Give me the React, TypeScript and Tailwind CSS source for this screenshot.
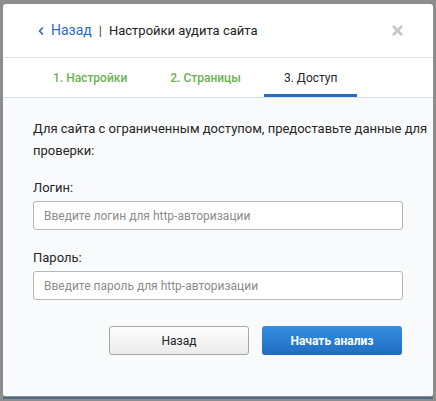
import { ChevronLeft, X } from "lucide-react";

const font = { fontFamily: "Roboto, 'Noto Sans', sans-serif" };

function Tab({ label, done, active }: { label: string; done?: boolean; active?: boolean }) {
  return (
    <div
      className={
        "flex h-full items-center px-5 pt-[4px] text-[12px] border-b-[3px] " +
        (active ? "border-[#2a6cc0] text-[#262626]" : "border-transparent") +
        (done ? " font-medium text-[#6cb153]" : "")
      }
    >
      {label}
    </div>
  );
}

function Field({ label, placeholder }: { label: string; placeholder: string }) {
  return (
    <div className="flex flex-col">
      <label className="text-[13px] text-[#262626] leading-[18px] mb-[4px]">{label}</label>
      <input
        placeholder={placeholder}
        className="h-[29px] w-full rounded-[3px] border border-[#b7b7b7] bg-white px-[10px] text-[12px] text-[#333] placeholder:text-[#8c8c8c] outline-none"
        style={font}
      />
    </div>
  );
}

export default function App() {
  return (
    <div className="h-[401px] w-[436px] overflow-hidden bg-[#8d8d8d] pt-[4px] px-[3px]" style={font}>
      <div className="flex h-[392px] flex-col overflow-hidden rounded-[3px] bg-white">
        {/* header */}
        <div className="flex h-[54px] shrink-0 items-center justify-between border-b border-[#d9e0ea] pl-[32px] pr-[28px]">
          <div className="flex items-center">
            <ChevronLeft className="mr-[4px] h-[12px] w-[12px] text-[#2b6cc4]" strokeWidth={3.5} />
            <span className="text-[14px] text-[#2b6cc4]">Назад</span>
            <span className="mx-[7px] text-[13px] text-[#444]">|</span>
            <span className="text-[13px] text-[#222]">Настройки аудита сайта</span>
          </div>
          <X className="h-[15px] w-[15px] text-[#c6c6c6]" strokeWidth={4.5} />
        </div>

        {/* tabs */}
        <div className="flex h-[40px] shrink-0 items-end gap-[3px] border-b border-[#d9e0ea] px-[30px]">
          <Tab label="1. Настройки" done />
          <Tab label="2. Страницы" done />
          <Tab label="3. Доступ" active />
        </div>

        {/* body */}
        <div className="flex flex-1 flex-col bg-[#f9fafc] px-[30px] pt-[20px]">
          <p className="whitespace-nowrap text-[13px] leading-[22px] text-[#262626]">
            Для сайта с ограниченным доступом, предоставьте данные для
            <br />
            проверки:
          </p>
          <div className="mt-[17px] flex flex-col gap-[19px]">
            <Field label="Логин:" placeholder="Введите логин для http-авторизации" />
            <Field label="Пароль:" placeholder="Введите пароль для http-авторизации" />
          </div>
          <div className="mt-[26px] flex justify-end gap-[13px] pr-[1px]">
            <button className="h-[29px] w-[140px] rounded-[3px] border border-[#a6a6a6] bg-gradient-to-b from-[#fdfdfd] to-[#ebebeb] text-[12px] text-[#222]">
              Назад
            </button>
            <button className="h-[29px] w-[140px] rounded-[3px] bg-gradient-to-b from-[#3590e2] to-[#1f6cc0] text-[12px] font-bold text-white">
              Начать анализ
            </button>
          </div>
        </div>
      </div>
      <div className="mt-[1px] h-[2px] bg-[#4c6a86]" />
    </div>
  );
}
